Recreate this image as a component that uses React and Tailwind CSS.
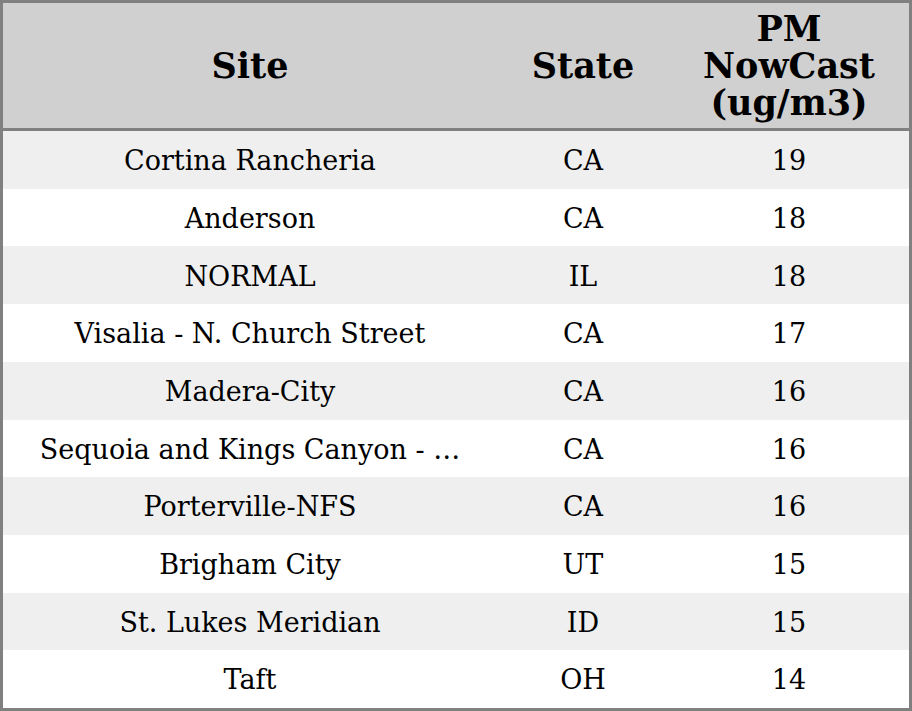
export default function App() {
  const rows = [
    ["Cortina Rancheria", "CA", "19"],
    ["Anderson", "CA", "18"],
    ["NORMAL", "IL", "18"],
    ["Visalia - N. Church Street", "CA", "17"],
    ["Madera-City", "CA", "16"],
    ["Sequoia and Kings Canyon - \u2026", "CA", "16"],
    ["Porterville-NFS", "CA", "16"],
    ["Brigham City", "UT", "15"],
    ["St. Lukes Meridian", "ID", "15"],
    ["Taft", "OH", "14"],
  ];
  return (
    <div className="w-[912px] h-[711px] border-[3px] border-[#808080] bg-white flex flex-col text-black" style={{ fontFamily: '"DejaVu Serif", serif' }}>
      <div className="h-[128px] bg-[#d0d0d0] border-b-[3px] border-[#808080] flex items-center text-[35px] font-bold leading-[37px] shrink-0">
        <div className="w-[494px] text-center">Site</div>
        <div className="w-[172px] text-center">State</div>
        <div className="w-[240px] text-center">PM<br />NowCast<br />(ug/m3)</div>
      </div>
      <div className="flex-1 flex flex-col text-[27px]">
        {rows.map((r, i) => (
          <div key={i} className={`flex-1 flex items-center pt-[3px] ${i % 2 === 0 ? "bg-[#efefef]" : "bg-white"}`}>
            <div className="w-[494px] text-center">{r[0]}</div>
            <div className="w-[172px] text-center">{r[1]}</div>
            <div className="w-[240px] text-center">{r[2]}</div>
          </div>
        ))}
      </div>
    </div>
  );
}
